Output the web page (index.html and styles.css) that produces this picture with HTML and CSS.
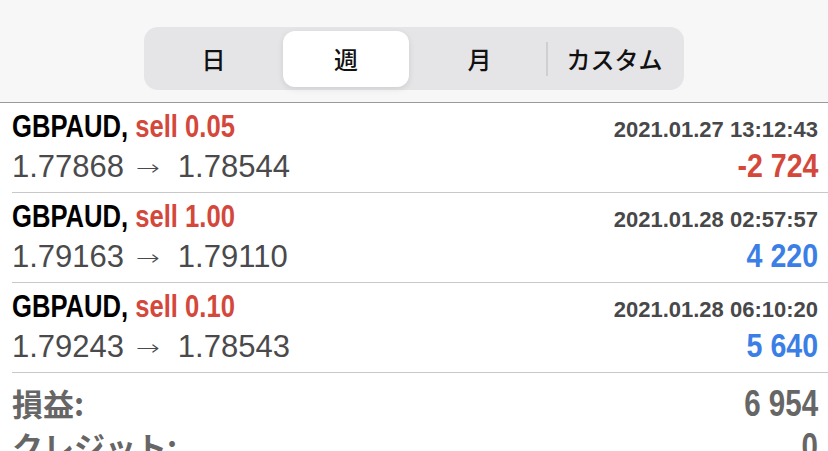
FILE: index.html
```html
<!DOCTYPE html>
<html lang="ja">
<head>
    <meta charset="UTF-8">
    <meta name="viewport" content="width=device-width, initial-scale=1.0">
    <title>履歴</title>
    <link rel="stylesheet" href="styles.css">
</head>
<body>
    <header class="top">
        <div class="seg">
            <button class="seg-btn">日</button>
            <button class="seg-btn active">週</button>
            <button class="seg-btn">月</button>
            <span class="seg-sep"></span>
            <button class="seg-btn">カスタム</button>
        </div>
    </header>

    <main class="deals">
        <div class="deal">
            <div class="line">
                <span class="sym">GBPAUD, <span class="sell">sell 0.05</span></span>
                <span class="time">2021.01.27 13:12:43</span>
            </div>
            <div class="line">
                <span class="price">1.77868<span class="arrow">→</span>1.78544</span>
                <span class="profit loss">-2 724</span>
            </div>
        </div>
        <div class="deal">
            <div class="line">
                <span class="sym">GBPAUD, <span class="sell">sell 1.00</span></span>
                <span class="time">2021.01.28 02:57:57</span>
            </div>
            <div class="line">
                <span class="price">1.79163<span class="arrow">→</span>1.79110</span>
                <span class="profit gain">4 220</span>
            </div>
        </div>
        <div class="deal">
            <div class="line">
                <span class="sym">GBPAUD, <span class="sell">sell 0.10</span></span>
                <span class="time">2021.01.28 06:10:20</span>
            </div>
            <div class="line">
                <span class="price">1.79243<span class="arrow">→</span>1.78543</span>
                <span class="profit gain">5 640</span>
            </div>
        </div>

        <div class="summary">
            <div class="sum-row">
                <span class="sum-label">損益:</span>
                <span class="sum-val">6 954</span>
            </div>
            <div class="sum-row">
                <span class="sum-label">クレジット:</span>
                <span class="sum-val">0</span>
            </div>
        </div>
    </main>
</body>
</html>
```

FILE: styles.css
```css
*{
    margin: 0;
    padding: 0;
    box-sizing: border-box;
}
body{
    background-color: #fff;
    font-family: "Liberation Sans", "Noto Sans CJK JP", sans-serif;
    overflow: hidden;
}
.top{
    height: 103px;
    background-color: #f7f7f7;
    border-bottom: 1px solid #9a9a9a;
    display: flex;
    justify-content: center;
    padding-top: 27px;
}
.seg{
    width: 540px;
    height: 63px;
    background-color: #e5e5e7;
    border-radius: 14px;
    display: flex;
    align-items: center;
    padding: 0 3px;
}
.seg-btn{
    flex: none;
    width: 133px;
    height: 56px;
    border: none;
    border-radius: 12px;
    background: none;
    font-family: "Noto Sans CJK JP", sans-serif;
    font-size: 24px;
    font-weight: 500;
    color: #111;
}
.seg-btn.active{
    width: 126px;
    margin: 0 4px 0 3px;
    background-color: #fff;
    box-shadow: 0 2px 6px rgba(0, 0, 0, 0.1);
}
.seg-sep{
    width: 2px;
    height: 34px;
    background-color: #cfcfd2;
}
.deal{
    height: 90px;
    margin-left: 12px;
    padding-right: 10px;
    padding-top: 4px;
    border-bottom: 1px solid #c8c8c8;
}
.line{
    display: flex;
    justify-content: space-between;
    align-items: baseline;
    height: 38px;
    line-height: 38px;
}
.line + .line{
    height: 40px;
    line-height: 40px;
}
.sym{
    display: inline-block;
    font-weight: bold;
    font-size: 32px;
    color: #000;
    white-space: nowrap;
    transform: scaleX(0.8);
    transform-origin: left;
}
.sell{
    color: #d4483b;
}
.time{
    font-weight: bold;
    font-size: 22px;
    color: #48484a;
}
.price{
    font-size: 31px;
    color: #4a4a4c;
    white-space: nowrap;
}
.arrow{
    display: inline-block;
    margin: 0 19px 0 13px;
    font-family: "DejaVu Sans", sans-serif;
    font-weight: 200;
    font-size: 26px;
    transform: scale(1.1, 0.8);
}
.profit{
    display: inline-block;
    font-weight: bold;
    font-size: 34px;
    transform: scaleX(0.84);
    transform-origin: right;
}
.loss{
    color: #d4483b;
}
.gain{
    color: #3b7fe6;
}
.summary{
    margin-left: 12px;
    padding-right: 10px;
    padding-top: 8px;
}
.sum-row{
    display: flex;
    justify-content: space-between;
    align-items: baseline;
    height: 43px;
    line-height: 43px;
    color: #666;
    font-weight: bold;
}
.sum-label{
    font-family: "Noto Sans CJK JP", sans-serif;
    font-size: 31px;
}
.sum-val{
    display: inline-block;
    font-size: 36px;
    transform: scaleX(0.82);
    transform-origin: right;
}
```
